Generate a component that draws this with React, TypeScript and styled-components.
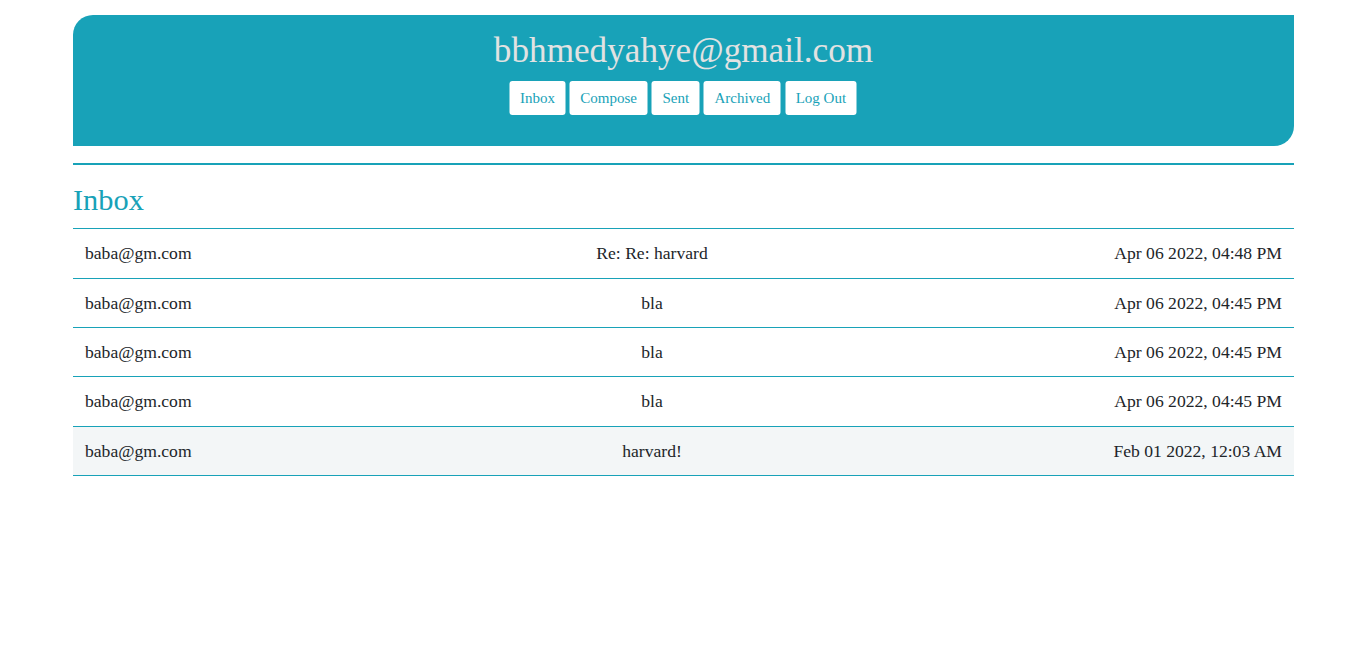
import React from "react";
import styled, { createGlobalStyle } from "styled-components";

const GlobalStyle = createGlobalStyle`
  html, body { margin: 0; padding: 0; background: #ffffff; }
  body { font-family: "Liberation Serif", "Times New Roman", serif; color: #212529; }
`;

const Page = styled.div`
  width: 1221px;
  margin: 0 0 0 73px;
  padding-top: 15px;
`;

const Header = styled.header`
  background: #18a2b8;
  border-radius: 20px 0 20px 0;
  height: 131px;
  box-sizing: border-box;
  padding-top: 18px;
  display: flex;
  flex-direction: column;
  align-items: center;
`;

const Title = styled.h1`
  margin: 0;
  font-size: 35.2px;
  font-weight: normal;
  line-height: 1;
  color: #e2e2e2;
`;

const Nav = styled.nav`
  display: flex;
  gap: 4.4px;
  margin-top: 13px;
  transform: translateX(-0.5px);
`;

const NavButton = styled.button`
  background: #ffffff;
  color: #18a2b8;
  border: none;
  border-radius: 3px;
  height: 34px;
  padding: 0 10.5px;
  font-family: "Liberation Serif", "Times New Roman", serif;
  font-size: 15px;
  cursor: pointer;
`;

const Rule = styled.hr`
  margin: 17px 0 0;
  border: none;
  height: 2px;
  background: #18a2b8;
`;

const Heading = styled.h2`
  margin: 17px 0 0;
  font-size: 30.4px;
  font-weight: normal;
  line-height: 1.2;
  color: #18a2b8;
  padding-bottom: 10px;
`;

const Table = styled.div`
  border-bottom: 1px solid #18a2b8;
`;

const Row = styled.div<{ $shaded?: boolean }>`
  display: grid;
  grid-template-columns: 384fr 390fr 447fr;
  border-top: 1px solid #18a2b8;
  background: ${(p) => (p.$shaded ? "#f3f6f7" : "#ffffff")};
  font-size: 17.6px;
  line-height: 1.38;
`;

const Cell = styled.div<{ $align: "left" | "center" | "right" }>`
  padding: 12px;
  text-align: ${(p) => p.$align};
  white-space: nowrap;
`;

const emails = [
  { from: "baba@gm.com", subject: "Re: Re: harvard", date: "Apr 06 2022, 04:48 PM", read: false },
  { from: "baba@gm.com", subject: "bla", date: "Apr 06 2022, 04:45 PM", read: false },
  { from: "baba@gm.com", subject: "bla", date: "Apr 06 2022, 04:45 PM", read: false },
  { from: "baba@gm.com", subject: "bla", date: "Apr 06 2022, 04:45 PM", read: false },
  { from: "baba@gm.com", subject: "harvard!", date: "Feb 01 2022, 12:03 AM", read: true },
];

export default function App() {
  return (
    <>
      <GlobalStyle />
      <Page>
        <Header>
          <Title>bbhmedyahye@gmail.com</Title>
          <Nav>
            <NavButton>Inbox</NavButton>
            <NavButton>Compose</NavButton>
            <NavButton>Sent</NavButton>
            <NavButton>Archived</NavButton>
            <NavButton>Log Out</NavButton>
          </Nav>
        </Header>
        <Rule />
        <Heading>Inbox</Heading>
        <Table>
          {emails.map((e, i) => (
            <Row key={i} $shaded={e.read}>
              <Cell $align="left">{e.from}</Cell>
              <Cell $align="center">{e.subject}</Cell>
              <Cell $align="right">{e.date}</Cell>
            </Row>
          ))}
        </Table>
      </Page>
    </>
  );
}
